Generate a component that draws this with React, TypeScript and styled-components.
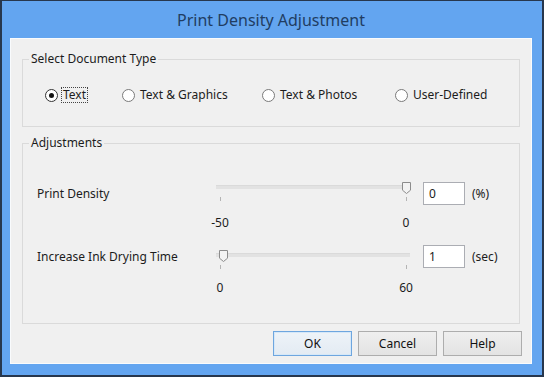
import React from "react";
import styled, { createGlobalStyle } from "styled-components";

const GlobalStyle = createGlobalStyle`
  html, body { margin: 0; padding: 0; background: #ffffff; }
  body { font-family: "Noto Sans", "Open Sans", sans-serif; font-size: 12px; color: #1c1c1c; }
  * { box-sizing: border-box; }
`;

const Window = styled.div`
  width: 544px;
  height: 377px;
  background: #63a5f0;
  border-style: solid;
  border-color: #27374d;
  border-width: 1px 2px 2px 2px;
  padding: 0 10px 11px 8px;
  display: flex;
  flex-direction: column;
`;

const TitleBar = styled.div`
  height: 37px;
  display: flex;
  align-items: center;
  justify-content: center;
  font-size: 16px;
  color: #213d62;
  padding: 1px 0 0 0;
`;

const Client = styled.div`
  flex: 1;
  background: #f0f0f0;
  border: 1px solid #f9fbfd;
  padding: 12px 11px 0 11px;
  display: flex;
  flex-direction: column;
`;

const Group = styled.fieldset<{ $mt?: number }>`
  margin: ${(p) => p.$mt ?? 0}px 0 0 0;
  padding: 0;
  border: 1px solid #dadada;
  min-width: 0;
`;

const Legend = styled.legend`
  margin-left: 6px;
  padding: 0 2px;
  line-height: 16px;
  font-size: 12px;
  color: #1c1c1c;
`;

const RadioRow = styled.div`
  display: grid;
  grid-template-columns: 77px 140px 133px auto;
  align-items: center;
  height: 16px;
  margin: 20px 0 23px 22px;
`;

const RadioOption = styled.div`
  display: flex;
  align-items: center;
`;

const RadioCircle = styled.span<{ $checked?: boolean }>`
  width: 13px;
  height: 13px;
  border-radius: 50%;
  border: 1px solid ${(p) => (p.$checked ? "#333333" : "#7a7a7a")};
  background: #ffffff;
  display: flex;
  align-items: center;
  justify-content: center;
  margin-right: 3px;
  &::after {
    content: "";
    width: 5px;
    height: 5px;
    border-radius: 50%;
    background: ${(p) => (p.$checked ? "#111111" : "transparent")};
  }
`;

const RadioCaption = styled.span<{ $focused?: boolean }>`
  border: 1px dotted ${(p) => (p.$focused ? "#444444" : "transparent")};
  padding: 0 1px;
  line-height: 14px;
`;

const Adjustments = styled.div`
  padding: 31px 0 27px 14px;
`;

const AdjustRow = styled.div<{ $mt?: number }>`
  display: grid;
  grid-template-columns: 179px 207px 49px auto;
  grid-template-rows: 23px auto;
  align-items: start;
  margin-top: ${(p) => p.$mt ?? 0}px;
`;

const RowLabel = styled.div`
  grid-row: 1;
  grid-column: 1;
  line-height: 23px;
`;

const Slider = styled.div<{ $offset: number }>`
  grid-row: 1;
  grid-column: 2;
  position: relative;
  width: 194px;
  height: 20px;
  margin-top: ${(p) => p.$offset}px;
`;

const Track = styled.div`
  margin-top: 3px;
  height: 4px;
  background: #e2e2e2;
  border-top: 1px solid #dadada;
`;

const Ticks = styled.div`
  display: flex;
  justify-content: space-between;
  margin-top: 8px;
  padding: 0 3px 0 4px;
`;

const Tick = styled.span`
  width: 1px;
  height: 4px;
  background: #b4b4b4;
`;

const Thumb = styled.svg`
  position: absolute;
  top: 0;
  width: 9px;
  height: 12px;
`;

const ScaleLabels = styled.div<{ $mt: number }>`
  grid-row: 2;
  grid-column: 2;
  display: flex;
  justify-content: space-between;
  width: 216px;
  margin: ${(p) => p.$mt}px 0 0 -11px;
  line-height: 16px;
`;

const ScaleLabel = styled.span`
  width: 30px;
  text-align: center;
`;

const TextBox = styled.div`
  grid-row: 1;
  grid-column: 3;
  width: 42px;
  height: 23px;
  border: 1px solid #abadb3;
  background: #ffffff;
  color: #1c1c1c;
  padding-left: 5px;
  line-height: 21px;
`;

const Unit = styled.div`
  grid-row: 1;
  grid-column: 4;
  line-height: 23px;
`;

const ButtonRow = styled.div`
  display: flex;
  justify-content: flex-end;
  gap: 6px;
  margin: 7px -2px 0 0;
`;

const Button = styled.button<{ $primary?: boolean }>`
  width: 79px;
  height: 25px;
  font-family: "Noto Sans", "Open Sans", sans-serif;
  font-size: 12px;
  color: #111111;
  padding: 0;
  border: 1px solid ${(p) => (p.$primary ? "#6ea6df" : "#adadad")};
  background: ${(p) =>
    p.$primary
      ? "linear-gradient(#eef3f8, #e3ebf3)"
      : "linear-gradient(#efefef, #e3e3e3)"};
  box-shadow: ${(p) => (p.$primary ? "inset 0 0 0 1px #d6e8f8" : "none")};
`;

type SliderProps = {
  label: string;
  min: number;
  max: number;
  value: number;
  unit: string;
  offset: number;
  scaleGap: number;
  mt?: number;
};

function SliderSetting({ label, min, max, value, unit, offset, scaleGap, mt }: SliderProps) {
  const frac = (value - min) / (max - min);
  const left = 4 + frac * 186 - 4;
  return (
    <AdjustRow $mt={mt}>
      <RowLabel>{label}</RowLabel>
      <Slider $offset={offset}>
        <Track />
        <Ticks>
          <Tick />
          <Tick />
        </Ticks>
        <Thumb viewBox="0 0 9 12" style={{ left: `${left}px` }}>
          <path
            d="M0.5 0.5 H8.5 V8.2 L4.5 11.5 L0.5 8.2 Z"
            fill="#f3f3f3"
            stroke="#8c8c8c"
            strokeWidth="1"
          />
        </Thumb>
      </Slider>
      <ScaleLabels $mt={scaleGap}>
        <ScaleLabel>{min}</ScaleLabel>
        <ScaleLabel>{max}</ScaleLabel>
      </ScaleLabels>
      <TextBox>{value}</TextBox>
      <Unit>{unit}</Unit>
    </AdjustRow>
  );
}

const docTypes = [
  { label: "Text", checked: true },
  { label: "Text & Graphics" },
  { label: "Text & Photos" },
  { label: "User-Defined" },
];

export default function App() {
  return (
    <>
      <GlobalStyle />
      <Window>
        <TitleBar>Print Density Adjustment</TitleBar>
        <Client>
          <Group>
            <Legend>Select Document Type</Legend>
            <RadioRow>
              {docTypes.map((d) => (
                <RadioOption key={d.label}>
                  <RadioCircle $checked={d.checked} />
                  <RadioCaption $focused={d.checked}>{d.label}</RadioCaption>
                </RadioOption>
              ))}
            </RadioRow>
          </Group>
          <Group $mt={8}>
            <Legend>Adjustments</Legend>
            <Adjustments>
              <SliderSetting
                label="Print Density"
                min={-50}
                max={0}
                value={0}
                unit="(%)"
                offset={0}
                scaleGap={10}
              />
              <SliderSetting
                label="Increase Ink Drying Time"
                min={0}
                max={60}
                value={1}
                unit="(sec)"
                offset={5}
                scaleGap={12}
                mt={14}
              />
            </Adjustments>
          </Group>
          <ButtonRow>
            <Button $primary>OK</Button>
            <Button>Cancel</Button>
            <Button>Help</Button>
          </ButtonRow>
        </Client>
      </Window>
    </>
  );
}
